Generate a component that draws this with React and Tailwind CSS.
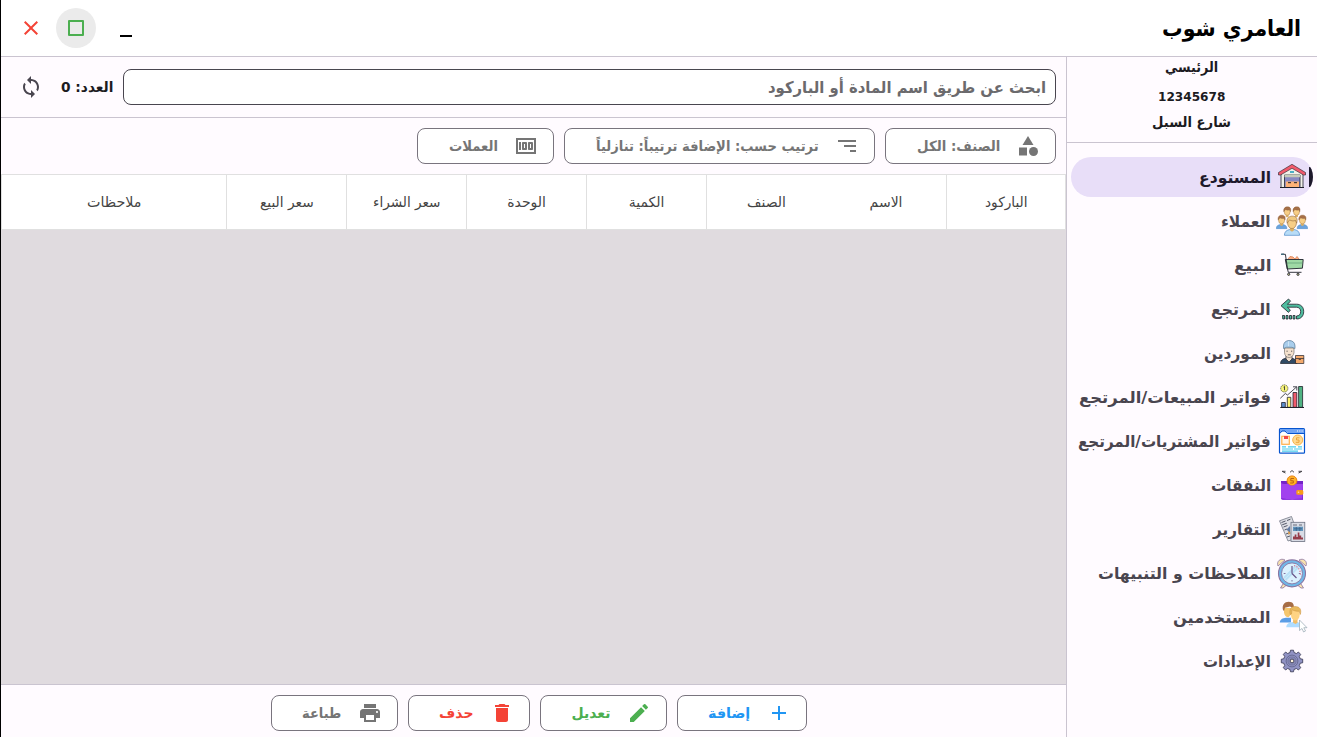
import React, { useLayoutEffect, useRef } from "react";
import {
  MdAdd, MdCategory, MdClose, MdDelete, MdEdit, MdMoney, MdPrint, MdSort, MdSync,
} from "react-icons/md";

/* A single line of text stretched to an exact advance width. */
function FitText({ width, className = "", children }) {
  const ref = useRef(null);
  useLayoutEffect(() => {
    const el = ref.current;
    el.style.transform = `scaleX(${width / el.offsetWidth})`;
  }, [width, children]);
  return (
    <span className={`flex shrink-0 justify-start leading-none ${className}`} style={{ width }}>
      <span ref={ref} className="inline-block shrink-0 origin-right whitespace-nowrap">{children}</span>
    </span>
  );
}

const INK = "#1f212b";

const WarehouseIcon = () => (
  <g>
    <path d="M5 12 16 5.5 27 12V26.5H5Z" fill="#f1f0e8" stroke={INK} strokeWidth=".8" />
    <path d="M2.5 11.5 16 3.3 29.5 11.5V14L27.5 14 16 7.3 4.5 14 2.5 14Z" fill="#f15b6c" stroke={INK} strokeWidth=".6" />
    <path d="M8.5 14H24V26.5H8.5Z" fill="#8889c2" stroke={INK} strokeWidth=".8" />
    <path d="M8.5 13.8H24V16.2H8.5Z" fill="#c6cbb9" />
    <path d="M9.8 20.5H23V26H9.8Z" fill="#ffb377" />
    <path d="M12 21.7h3m3 0h3" stroke={INK} strokeWidth="1" />
    <path d="M14 11h4" stroke="#4bafc4" strokeWidth="1.8" />
    <path d="M4 26.5H28" stroke={INK} strokeWidth="1.1" />
  </g>
);

const Person = ({ x, y, s = 1, hair, body }) => (
  <g transform={`translate(${x} ${y}) scale(${s})`}>
    {body && <path d="M-5.5 9C-5.3 6-3.8 5.3-1.5 4.8H1.5C3.8 5.3 5.3 6 5.5 9Z" fill={body} stroke="#4788c7" strokeWidth=".5" />}
    <path d="M-1.5 3H1.5V5.4L0 6.4-1.5 5.4Z" fill="#dbb065" />
    <ellipse rx="3.2" ry="4.1" fill="#f7ce86" stroke="#a47c4c" strokeWidth=".5" />
    <path d="M-3.5.2C-4.3-2.8-2.5-5 .3-4.9 3.4-4.9 4.3-2.7 3.4.2L2.6-1.8C.8-1.1-.8-1.5-1.7-2.2L-2.8-.8Z" fill={hair} stroke="#8e6138" strokeWidth=".4" />
  </g>
);

const ClientsIcon = () => (
  <g>
    <Person x={11.2} y={6.5} s={0.95} hair="#a66f48" />
    <Person x={20.5} y={6.5} s={0.95} hair="#a66f48" />
    <Person x={5.6} y={14.9} s={0.97} hair="#a66f48" body="#6ca3dd" />
    <Person x={26.4} y={14.9} s={0.97} hair="#a66f48" body="#6ca3dd" />
    <Person x={16} y={17.9} s={1.38} hair="#efc97f" body="#b8dcf7" />
  </g>
);

const CartIcon = () => (
  <g fill="none" stroke={INK} strokeWidth=".9">
    <path d="M12 10 14 7.5 17 8 19 10 21 7.5 23 10" fill="#ffac81" stroke="#d98960" />
    <path d="M9.3 10.5H27.2L26.4 19.2 11.2 20Z" fill="#9fd9a5" />
    <path d="M9.8 14H26.7" stroke="#5b9b72" strokeWidth=".7" />
    <path d="M6 5.3H9.4L11.5 20 12.3 23.3H25.5" />
    <path d="M5 5.3H8" stroke="#456b7c" strokeWidth="1.5" />
    <circle cx="12.7" cy="25.3" r="1.1" fill="#d8d394" /><circle cx="22" cy="25.3" r="1.1" fill="#d8d394" />
  </g>
);

const ReturnIcon = () => (
  <g stroke={INK} strokeWidth=".8" strokeLinejoin="round">
    <path d="M5 12.7 12.5 6 14.6 8.2 11.4 11.2H20.5C25 11.2 27.7 14.2 27.7 18.4 27.7 23 25 26 20.5 26V23C23.2 23 24.7 21.2 24.7 18.6 24.7 16 23 14.2 20.4 14.2H11.4L14.4 17 12.5 19.4Z" fill="#4fbc9f" />
    <path d="M6.5 22.5h2V26H6.8ZM10 22.5h2V26h-2ZM13.5 22.5h2V26h-2ZM17 22.5h2V26h-2Z" fill="#4fbc9f" />
  </g>
);

const SupplierIcon = () => (
  <g stroke={INK} strokeWidth=".7" strokeLinejoin="round">
    <path d="M4.5 26.5C4.8 23 6.5 22 10.5 21H15.5C19 22 20.5 23 21 26.5Z" fill="#314a65" />
    <path d="M10 19V22L13 25 16 22V19Z" fill="#f1dfcd" />
    <path d="M8.5 11H18V15.5C17.7 18.5 15.5 20.5 13.2 20.5 10.5 20.5 8.7 18.5 8.5 15.5Z" fill="#f5e1ce" stroke="#75706b" />
    <path d="M7.5 11.5V9C7.5 5.7 9.8 3.5 13.2 3.5S19 5.7 19 9V11.5L16 10.3H10.5Z" fill="#a9cdec" stroke="#577894" />
    <path d="M10.5 14.2h1.2m3.3 0h1.2M11.8 17.8h3" />
    <path d="M12.5 4.2v5" stroke="#dceefa" />
    <rect x="19.5" y="18.5" width="8.3" height="8" fill="#f3a96d" />
    <path d="M19.5 21.5H27.8M22.7 22.5h2.2" />
  </g>
);

const SalesIcon = () => (
  <g stroke={INK} strokeWidth=".8">
    <path d="M5.6 21.5H9.3V26.3H5.6Z" fill="#5c8ed0" />
    <path d="M11.3 16.3H14.8V26.3H11.3Z" fill="#fff16c" />
    <path d="M17 11.5H20.8V26.3H17Z" fill="#f15b6c" />
    <path d="M22.6 5.5H26.6V26.3H22.6Z" fill="#50b383" />
    <path d="M4.3 26.5H28" strokeWidth="1.2" />
    <circle cx="8.3" cy="7.4" r="3.6" fill="#f8f47b" strokeWidth=".6" strokeDasharray="1.4 .6" />
    <path d="M7.6 6.1 8.5 5.5V9.3" fill="none" />
    <path d="M4.3 17.3 9.3 12.5 11.5 14 20.5 6M17 5.8H20.8V9.5" fill="none" />
  </g>
);

const PurchasesIcon = () => (
  <g>
    <rect x="3.5" y="3.5" width="25" height="24.7" rx="1" fill="#fff" stroke="#0754cf" strokeWidth="1.2" />
    <path d="M4 4H28.2V8.3H12L9.5 6.2H6L4 8.3Z" fill="#70a4f5" />
    <path d="M4 8.3 6 6H9L11.3 8.5H28.5" fill="none" stroke="#0754cf" />
    <path d="M21 6h1m1.3 0h1m1.3 0h1" stroke="#fff" />
    <rect x="5.8" y="11.3" width="7.5" height="8" fill="#fff7ea" stroke="#ffb04c" strokeWidth="1.2" />
    <path d="M8 11H12V14H8Z" fill="#f34848" />
    <circle cx="21.7" cy="15" r="5" fill="#ffda91" stroke="#f9b34c" strokeWidth="1" />
    <path d="M23.5 12.8H20.5V15H23V17.3H19.8" fill="none" stroke="#eda33d" />
    <path d="M6 21.8H10M12 21.8H20M22 21.8H26M6 24H17M18 24H26M6 26.2H22" stroke="#4acbed" strokeWidth="1.2" />
  </g>
);

const ExpensesIcon = () => (
  <g>
    <path d="M5 12H27V18H5Z" fill="#7424c7" />
    <circle cx="16" cy="11.8" r="4.9" fill="#ffb326" stroke="#e98212" strokeWidth="1" />
    <path d="M18 9.5H14.8V11.8H17.3V14H14.2" fill="none" stroke="#b75b11" strokeWidth=".9" />
    <path d="M5 12.5C5 14.2 6 15 8 15H12.5C14 17 18 17 19.5 15H27V30.7H7C5.7 30.7 5 30 5 28.6Z" fill="#a142ee" />
    <path d="M27 16V30.7H7C5.5 30.7 5 29.8 5 29 12 30.6 20 30.2 26 29.6Z" fill="#812bd7" />
    <rect x="20.3" y="21" width="7" height="4.8" rx="1.4" fill="#f99b1a" /><circle cx="22.5" cy="23.3" r=".8" fill="#ffe08a" />
    <path d="M6.3 2.5 9.5 4M6 2.3H9.5M14 3.3 16 1.5 18 3.3M22.5 4 25.7 2.5M22.5 2.3H26" stroke="#35343a" strokeWidth=".9" fill="none" />
  </g>
);

const ReportsIcon = () => (
  <g>
    <path d="M3.5 7.8 15.5 3.5 23 24.5 12 28Z" fill="#dedfe5" stroke="#747887" strokeWidth=".8" />
    <path d="M5.5 9.5 9.5 8M11 7.5 14.5 6.2M6.2 11.8 10.8 10.2M7.5 14 11.5 12.5M8.5 17 11 16M10 21 14 19.5M11 24 14 23" stroke="#555969" strokeWidth="1" />
    <path d="M10.5 16.5 14 13V20Z" fill="#647da5" /><path d="M12 18 15 20 12.5 22Z" fill="#dc9b4c" />
    <rect x="15" y="9.3" width="13.8" height="19.2" fill="#d9dce6" stroke="#6c7181" strokeWidth=".8" />
    <path d="M17 12h4m2 0h3" stroke="#676b79" />
    <path d="M17 13.8H27V18H17Z" fill="#6194bc" /><path d="M18 15.8H26M20.3 14V18M23.8 14V18" stroke="#385c84" strokeWidth=".7" />
    <path d="M17 26.5V23.5H18.7V21.5H20.4V24H21.7V19.5H23.4V22.5H25.2V24.5H27V26.5Z" fill="#963c49" />
  </g>
);

const ClockIcon = () => (
  <g stroke="#8b75a1" strokeWidth=".8">
    <path d="M7 27 4.5 31H7L10 28.5M25 27 27.5 31H25L22 28.5" fill="#f9e3ae" />
    <path d="M2 9C.2 4.3 4.6.6 9 3ZM30 9C31.8 4.3 27.4.6 23 3Z" fill="#f9e3ae" />
    <circle cx="16" cy="16.4" r="13.5" fill="#70b8e8" strokeWidth="1.1" />
    <circle cx="16" cy="16.4" r="10.5" fill="#dbf1fe" strokeWidth=".9" />
    <path d="M8 21 21 8M9.5 23 23 9.5" stroke="#b9e0f6" strokeWidth="2" />
    <path d="M16 16.5V9M16 16.5 20.5 21" fill="none" stroke="#6a5689" strokeWidth="1.2" />
    <path d="M16 24.5V23M7.7 16.5H9.5M22.8 16.5H24.5" stroke="#6a5689" />
    <path d="M18 8.5A8.3 8.3 0 0 1 24 18.8" fill="none" stroke="#ee6b85" strokeWidth="1.2" strokeDasharray="1.1 1.6" />
  </g>
);

const UsersIcon = () => (
  <g>
    <path d="M3.8 21.5C4 18 6.5 17.2 10 16.7H15V21.5Z" fill="#5b9de6" />
    <path d="M8 7V11.5C8.3 14.5 10 16.2 12.5 16.2L15.5 13V7Z" fill="#f5c66f" />
    <path d="M7 9C5.8 3.8 8.5.7 12.7.7 17 .7 18.6 3.6 17.5 7.5L14 5.5 9 6.8 8 10Z" fill="#a76d46" />
    <path d="M10.3 26.2C10.3 22.8 13 21.8 17 21H21.5C24 21.8 25 23 25 26.2Z" fill="#aedcff" />
    <path d="M17.2 18H21.5V21.7L19.5 23 17 21.7Z" fill="#f0bd6a" />
    <ellipse cx="19.3" cy="13.6" rx="4.4" ry="6" fill="#ffd383" />
    <path d="M14.2 13.5C13.2 8.5 14.7 5.5 19 5.5 23.8 5.5 25.8 8.5 24.3 13.5L23.2 10.2C20 10.4 17.5 9.5 16 8.7L15.5 13Z" fill="#e8b95d" stroke="#c88f3d" strokeWidth=".5" />
    <path d="M23.5 19V29.5L26 27.5 27.6 31 29.5 30 27.8 26.7H31Z" fill="#fff" stroke="#94a5b0" strokeWidth=".7" />
  </g>
);

const GearIcon = () => (
  <g stroke="#35354f" strokeWidth=".8">
    <path d="M14 7.5 14.5 5.2H17.5L18 7.5 20.4 8.5 22.4 7 24.7 9.4 23.3 11.5 24.3 13.8 26.7 14.2V17.8L24.3 18.2 23.3 20.5 24.7 22.7 22.4 25 20.4 23.5 18 24.5 17.5 26.8H14.5L14 24.5 11.6 23.5 9.6 25 7.3 22.7 8.7 20.5 7.7 18.2 5.3 17.8V14.2L7.7 13.8 8.7 11.5 7.3 9.4 9.6 7 11.6 8.5Z" fill="#9193c4" strokeLinejoin="round" />
    <circle cx="16" cy="16" r="5.9" fill="#9293c2" stroke="#5c5f88" />
    <circle cx="16" cy="16" r="4.1" fill="#8487b4" stroke="#686a94" strokeWidth=".6" />
    <rect x="14.4" y="14.3" width="3.3" height="3.3" rx=".7" fill="#fff4dc" />
  </g>
);

const NAV = [
  ["المستودع", 72, WarehouseIcon],
  ["العملاء", 50, ClientsIcon],
  ["البيع", 37, CartIcon],
  ["المرتجع", 60, ReturnIcon],
  ["الموردين", 67, SupplierIcon],
  ["فواتير المبيعات/المرتجع", 192, SalesIcon],
  ["فواتير المشتريات/المرتجع", 193, PurchasesIcon],
  ["النفقات", 60, ExpensesIcon],
  ["التقارير", 58, ReportsIcon],
  ["الملاحظات و التنبيهات", 173, ClockIcon],
  ["المستخدمين", 98, UsersIcon],
  ["الإعدادات", 68, GearIcon],
];

const COLUMNS = [
  ["الباركود", 43, "w-[119px] border-l"],
  ["الاسم", 33, "w-[120px]"],
  ["الصنف", 39, "w-[120px] border-l"],
  ["الكمية", 36, "w-[120px] border-l"],
  ["الوحدة", 39, "w-[120px] border-l"],
  ["سعر الشراء", 68, "w-[120px] border-l"],
  ["سعر البيع", 54, "w-[120px] border-l"],
  ["ملاحظات", 54, "w-[224px]"],
];

function OutlineButton({ icon: Icon, label, width, className = "text-[#757575]", iconClass = "" }) {
  return (
    <button className={`box-border flex h-9 shrink-0 items-center gap-4 rounded-lg border border-[#79747e] bg-white pr-[15px] pl-[31px] ${className}`}>
      <Icon size={24} className={`shrink-0 ${iconClass}`} />
      <FitText width={width} className="text-[14px] font-bold">{label}</FitText>
    </button>
  );
}

function Sidebar() {
  return (
    <aside className="flex w-[251px] shrink-0 flex-col border-l border-[#cac4d0] bg-[#fffbff]">
      <div className="flex h-[86px] shrink-0 flex-col items-center border-b border-[#cac4d0] text-[14px] font-bold text-[#1c1b1f]">
        <div className="flex h-[20px] items-center"><FitText width={53}>الرئيسي</FitText></div>
        <div className="flex h-[38px] items-center"><FitText width={67} className="text-[13px]">12345678</FitText></div>
        <div className="flex h-[14px] items-center"><FitText width={79}>شارع السبل</FitText></div>
      </div>
      <nav className="flex flex-col gap-1 pt-[14px] pr-1 pl-1">
        {NAV.map(([label, width, Icon], i) => (
          <div key={label} className={`relative flex h-10 items-center gap-[5px] overflow-hidden rounded-full pr-[5px] ${i === 0 ? "bg-[#e8def8] text-[#1d192b]" : "text-[#49454f]"}`}>
            {i === 0 && <span className="absolute top-[10px] right-0 h-5 w-1 rounded-r-full bg-[#1d192b]" />}
            <svg viewBox="0 0 32 32" className="h-8 w-8 shrink-0"><Icon /></svg>
            <FitText width={width} className="pt-[2px] text-[16px] font-bold">{label}</FitText>
          </div>
        ))}
      </nav>
    </aside>
  );
}

export default function App() {
  return (
    <div dir="rtl" className="flex h-[737px] w-[1317px] flex-col overflow-hidden border-l border-black bg-[#fffbff] font-['DejaVu_Sans',sans-serif]">
      <header className="flex h-[57px] shrink-0 items-center justify-between border-b border-[#cac4d0] bg-white pr-4 pl-[10px]">
        <FitText width={139} className="pt-[2px] text-[22px] font-bold text-black">العامري شوب</FitText>
        <div className="flex items-center gap-[5px]">
          <button className="flex h-10 w-10 items-center justify-center"><span className="mt-4 h-[2px] w-3 bg-black" /></button>
          <div className="w-0" />
          <button className="flex h-10 w-10 items-center justify-center rounded-full bg-[#ebebeb]">
            <span className="h-4 w-4 rounded-[1px] border-2 border-[#4caf50]" />
          </button>
          <button className="flex h-10 w-10 items-center justify-center text-[#f44336]"><MdClose size={24} /></button>
        </div>
      </header>
      <div className="flex min-h-0 flex-1">
        <Sidebar />
        <main className="flex w-[1065px] shrink-0 flex-col">
          <div className="flex h-[61px] shrink-0 items-center border-b border-[#cac4d0] pr-[10px] pl-[18px]">
            <div className="flex h-9 w-[933px] shrink-0 items-center rounded-lg border border-[#49454f] bg-white pr-[9px]">
              <FitText width={278} className="pt-[2px] text-[16px] font-bold text-[#6b6a6d]">ابحث عن طريق اسم المادة أو الباركود</FitText>
            </div>
            <FitText width={52} className="mr-[10px] text-[14px] font-bold text-[#1c1b1f]">العدد: 0</FitText>
            <MdSync size={24} className="mr-[18px] shrink-0 text-[#49454f]" />
          </div>
          <div className="flex h-14 shrink-0 items-center gap-[10px] pr-[10px]">
            <OutlineButton icon={MdCategory} label="الصنف: الكل" width={83} />
            <OutlineButton icon={MdSort} label="ترتيب حسب: الإضافة ترتيباً: تنازلياً" width={223} iconClass="-scale-x-100" />
            <OutlineButton icon={MdMoney} label="العملات" width={49} />
          </div>
          <div className="flex h-14 shrink-0 border border-[#e0e0e0] bg-white text-[14px] text-[#444444]">
            {COLUMNS.map(([label, width, cell]) => (
              <div key={label} className={`flex shrink-0 items-center justify-center border-[#e0e0e0] ${cell}`}>
                <FitText width={width}>{label}</FitText>
              </div>
            ))}
          </div>
          <div className="min-h-0 flex-1 bg-[#e0dbdf]" />
          <div className="flex h-[53px] shrink-0 items-center gap-[10px] border-t border-[#cac4d0] pt-[4px] pr-[259.5px]">
            <OutlineButton icon={MdAdd} label="إضافة" width={42} className="text-[#2196f3]" />
            <OutlineButton icon={MdEdit} label="تعديل" width={39} className="text-[#4caf50]" />
            <OutlineButton icon={MdDelete} label="حذف" width={34} className="text-[#f44336]" />
            <OutlineButton icon={MdPrint} label="طباعة" width={39} />
          </div>
        </main>
      </div>
    </div>
  );
}
